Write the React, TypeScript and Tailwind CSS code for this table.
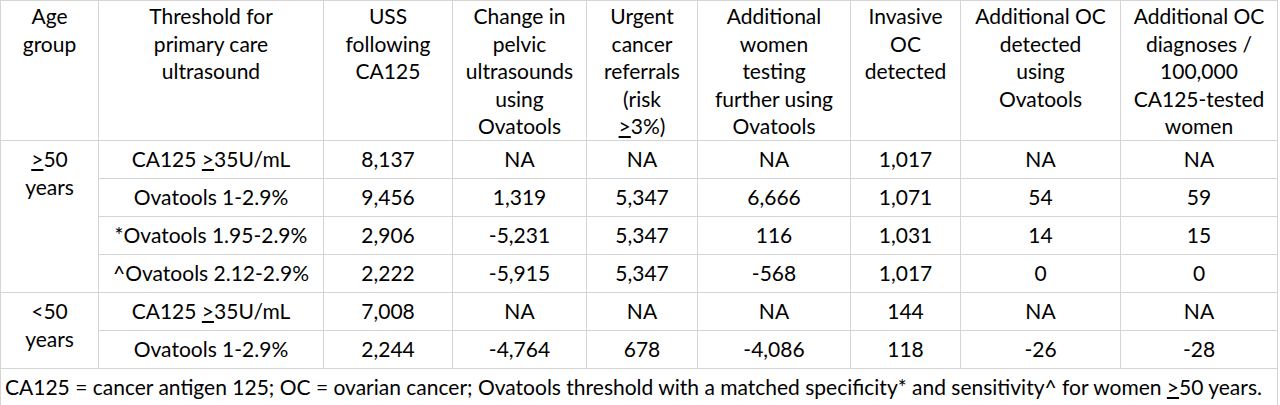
import React from 'react';

// Column widths in px, measured off the grid lines
const colWidths = [98, 225, 129, 134, 111, 153, 110, 160, 157];

const Ge: React.FC = () => <span className="underline underline-offset-2">&gt;</span>;

type Row = { threshold: React.ReactNode; values: string[] };

const older: Row[] = [
  { threshold: <>CA125 <Ge />35U/mL</>, values: ['8,137', 'NA', 'NA', 'NA', '1,017', 'NA', 'NA'] },
  { threshold: 'Ovatools 1-2.9%', values: ['9,456', '1,319', '5,347', '6,666', '1,071', '54', '59'] },
  { threshold: '*Ovatools 1.95-2.9%', values: ['2,906', '-5,231', '5,347', '116', '1,031', '14', '15'] },
  { threshold: '^Ovatools 2.12-2.9%', values: ['2,222', '-5,915', '5,347', '-568', '1,017', '0', '0'] },
];

const younger: Row[] = [
  { threshold: <>CA125 <Ge />35U/mL</>, values: ['7,008', 'NA', 'NA', 'NA', '144', 'NA', 'NA'] },
  { threshold: 'Ovatools 1-2.9%', values: ['2,244', '-4,764', '678', '-4,086', '118', '-26', '-28'] },
];

const headers: React.ReactNode[] = [
  <>Age<br />group</>,
  <>Threshold for<br />primary care<br />ultrasound</>,
  <>USS<br />following<br />CA125</>,
  <>Change in<br />pelvic<br />ultrasounds<br />using<br />Ovatools</>,
  <>Urgent<br />cancer<br />referrals<br />(risk<br /><Ge />3%)</>,
  <>Additional<br />women<br />testing<br />further using<br />Ovatools</>,
  <>Invasive<br />OC<br />detected</>,
  <>Additional OC<br />detected<br />using<br />Ovatools</>,
  <>Additional OC<br />diagnoses /<br />100,000<br />CA125-tested<br />women</>,
];

const cell = 'border border-[#d4d4d4] align-top text-center px-1 pt-[4px] pb-0';
const headCell = 'border border-[#d4d4d4] align-top text-center px-1 pt-[1px] pb-0';

const Group: React.FC<{ label: React.ReactNode; rows: Row[] }> = ({ label, rows }) => (
  <>
    {rows.map((row, i) => (
      <tr key={i} className="h-[38px]">
        {i === 0 && (
          <td rowSpan={rows.length} className={cell}>
            {label}
          </td>
        )}
        <td className={cell}>{row.threshold}</td>
        {row.values.map((v, j) => (
          <td key={j} className={cell}>{v}</td>
        ))}
      </tr>
    ))}
  </>
);

export default function App() {
  return (
    <div className="w-[1280px] h-[405px] bg-white overflow-hidden">
      <table
        className="table-fixed border-collapse text-black text-[21px] leading-[27.5px] w-[1278px]"
        style={{ fontFamily: 'Lato, "Open Sans", sans-serif' }}
      >
        <colgroup>
          {colWidths.map((w, i) => (
            <col key={i} style={{ width: w }} />
          ))}
        </colgroup>
        <tbody>
          <tr className="h-[140px]">
            {headers.map((h, i) => (
              <td key={i} className={headCell}>{h}</td>
            ))}
          </tr>
          <Group label={<><Ge />50<br />years</>} rows={older} />
          <Group label={<>&lt;50<br />years</>} rows={younger} />
          <tr className="h-[37px]">
            <td colSpan={9} className="border border-[#d4d4d4] align-top text-left pl-[4px] pt-[4px] whitespace-nowrap">
              CA125 = cancer antigen 125; OC = ovarian cancer; Ovatools threshold with a matched specificity* and sensitivity^ for women <Ge />50 years.
            </td>
          </tr>
        </tbody>
      </table>
    </div>
  );
}
